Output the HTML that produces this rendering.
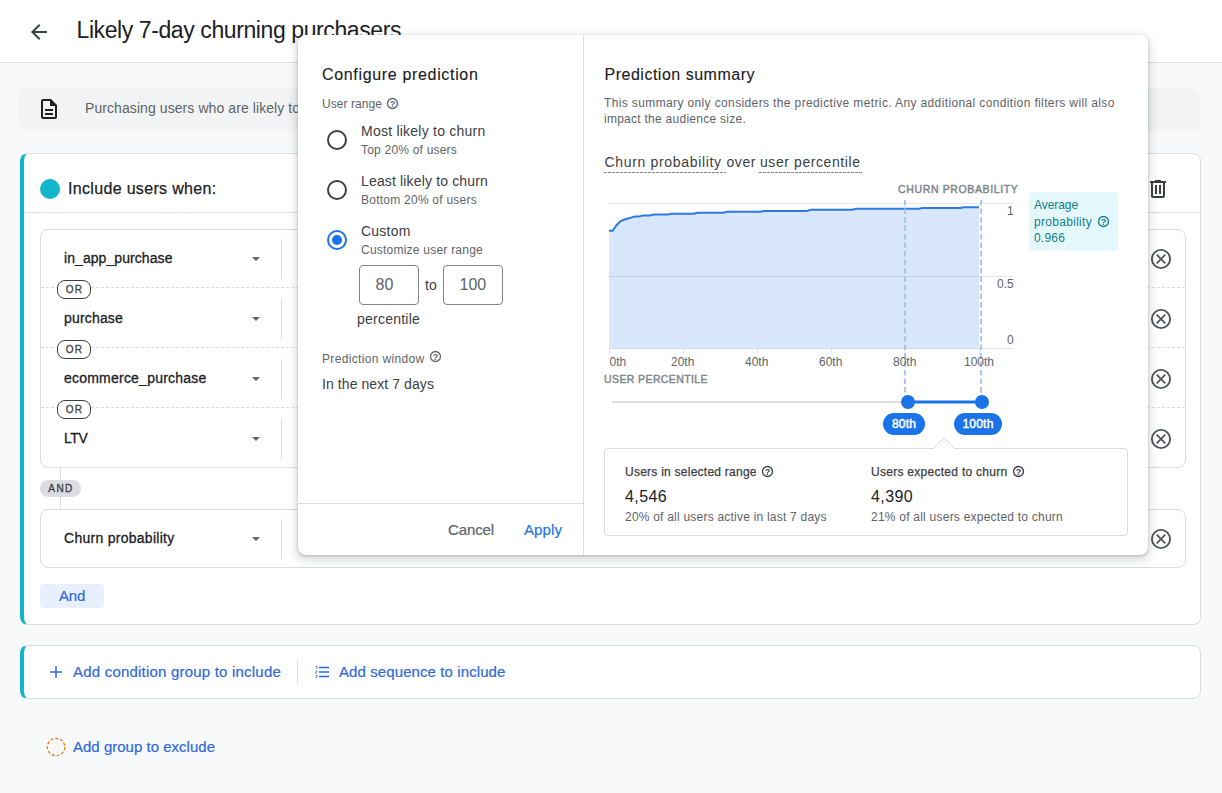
<!DOCTYPE html>
<html><head><meta charset="utf-8">
<style>
*{box-sizing:border-box;margin:0;padding:0}
html,body{width:1222px;height:793px;overflow:hidden;background:#f8f9fa;font-family:"Liberation Sans",sans-serif;color:#202124}
.abs{position:absolute}
.t{position:absolute;white-space:nowrap;line-height:1}
#hdr{position:absolute;left:0;top:0;width:1222px;height:63px;background:#fff;border-bottom:1px solid #dadce0}
#desc{position:absolute;left:19px;top:88px;width:1181px;height:43px;background:#f1f3f4;border-radius:8px}
.card{position:absolute;left:20px;width:1181px;background:#fff;border:1px solid #dadce0;border-left:4px solid #12b5cb;border-radius:8px}
.ibox{position:absolute;left:40px;width:1146px;border:1px solid #dadce0;border-radius:8px;background:#fff}
.dd{font-size:14px;color:#202124;-webkit-text-stroke:0.3px currentColor}
.caret{position:absolute;width:0;height:0;border-left:4px solid transparent;border-right:4px solid transparent;border-top:4px solid #5f6368}
.vsep{position:absolute;width:1px;background:#dadce0}
.dash{position:absolute;left:41px;width:1144px;height:0;border-top:1px dashed #dadce0}
.or{position:absolute;left:57px;width:34px;height:19px;border:1.2px solid #3c4043;border-radius:8px;background:#fff;font-size:10px;-webkit-text-stroke:0.3px #3c4043;color:#3c4043;text-align:center;line-height:17px;letter-spacing:1.2px;padding-left:1px}
#modal{position:absolute;left:298px;top:35px;width:850px;height:520px;background:#fff;border-radius:8px;box-shadow:0 1px 3px rgba(60,64,67,.3),0 4px 8px 3px rgba(60,64,67,.15)}
.g{color:#5f6368}
.blue{color:#1a73e8}

.med{-webkit-text-stroke:0.12px currentColor}
.med2{-webkit-text-stroke:0.25px currentColor}
.radio{width:20px;height:20px;border:2px solid #3c4043;border-radius:50%}
.radio.on{border-color:#1a73e8}
.radio.on i{position:absolute;left:3px;top:3px;width:10px;height:10px;border-radius:50%;background:#1a73e8}
.inp{width:60px;height:40px;border:1px solid #80868b;border-radius:4px;font-size:16px;color:#5f6368;text-align:left;padding-left:15.5px;line-height:38px}
.ctt{font-size:14px;color:#3c4043}
.dul{height:1.4px;background:repeating-linear-gradient(90deg,#80868b 0 2.7px,transparent 2.7px 4px)}
.axl{font-size:10.5px;color:#80868b;-webkit-text-stroke:0.45px currentColor}
.xl{font-size:12px}
.tl{color:#12808c}
.pill{height:21.5px;border-radius:11px;background:#1a73e8;color:#fff;font-size:12px;-webkit-text-stroke:0.45px #fff;letter-spacing:0.2px;text-align:center;line-height:22.5px}
#addc,#adds,#addx,#andb,#cancel,#apply{-webkit-text-stroke:0.2px currentColor}
</style>
<style id="ls">
#title{letter-spacing:-0.407px}
#incl{letter-spacing:0.326px}
#addc{letter-spacing:0.206px}
#adds{letter-spacing:0.096px}
#addx{letter-spacing:0.011px}
#cfg{letter-spacing:0.665px}
#ur{letter-spacing:0.062px}
#r1{letter-spacing:0.234px}
#r1s{letter-spacing:0.205px}
#r2{letter-spacing:0.156px}
#r2s{letter-spacing:0.243px}
#r3{letter-spacing:0.211px}
#r3s{letter-spacing:0.230px}
#pct{letter-spacing:0.230px}
#pw{letter-spacing:0.340px}
#n7{letter-spacing:0.082px}
#cancel{letter-spacing:-0.117px}
#apply{letter-spacing:0.094px}
#ps{letter-spacing:0.507px}
#ps1{letter-spacing:0.371px}
#ps2{letter-spacing:0.263px}
#ct1{letter-spacing:0.671px}
#ct2{letter-spacing:0.566px}
#ct3{letter-spacing:0.578px}
#cp{letter-spacing:0.636px}
#up{letter-spacing:0.398px}
#av1{letter-spacing:-0.069px}
#av2{letter-spacing:0.300px}
#av3{letter-spacing:0.194px}
#u1{letter-spacing:0.247px}
#n1{letter-spacing:0.391px}
#s1{letter-spacing:0.219px}
#u2{letter-spacing:0.279px}
#n2{letter-spacing:0.391px}
#s2{letter-spacing:0.232px}
#dd0{letter-spacing:0.072px}
#dd1{letter-spacing:0.176px}
#dd2{letter-spacing:0.221px}
#dd3{letter-spacing:-0.380px}
#dd4{letter-spacing:0.274px}
#andb{letter-spacing:-0.234px}
</style></head><body>
<div id="hdr"></div>
<svg class="abs" style="left:27px;top:20px" width="24" height="24" viewBox="0 0 24 24"><path d="M20 11H7.83l5.59-5.59L12 4l-8 8 8 8 1.41-1.41L7.83 13H20v-2z" fill="#3c4043"/></svg>
<div class="t" id="title" style="left:76.5px;top:19px;font-size:23px;color:#202124">Likely 7-day churning purchasers</div>
<div id="desc"></div>
<svg class="abs" style="left:37px;top:97px" width="24" height="24" viewBox="0 0 24 24"><path d="M8 16h8v2H8zm0-4h8v2H8zm6-10H6c-1.100 0-2 .9-2 2v16c0 1.100.89 2 1.990 2H18c1.100 0 2-.9 2-2V8l-6-6zm4 18H6V4h7v5h5v11z" fill="#202124"/></svg>
<div class="t g" id="desctxt" style="left:85px;top:101px;font-size:14px;letter-spacing:0.08px">Purchasing users who are likely to churn in the next 7 days.</div>

<div class="card" style="top:153px;height:472px"></div>
<div class="abs" style="left:40px;top:179px;width:20px;height:20px;border-radius:50%;background:#12b5cb"></div>
<div class="t" id="incl" style="left:68px;top:181px;font-size:16px;color:#202124;-webkit-text-stroke:0.25px currentColor">Include users when:</div>
<div class="abs" style="left:24px;top:212px;width:1176px;height:1px;background:#dadce0"></div>
<svg class="abs" style="left:1146px;top:177px" width="24" height="24" viewBox="0 0 24 24"><path d="M15 4V3H9v1H4v2h1v13c0 1.100.9 2 2 2h10c1.100 0 2-.9 2-2V6h1V4h-5zm2 15H7V6h10v13zM9 8h2v9H9zm4 0h2v9h-2z" fill="#3c4043"/></svg>

<div class="ibox" style="top:229px;height:239px"></div>
<div class="ibox" style="top:509px;height:59px"></div>

<div class="t dd" id="dd0" style="left:64px;top:251px">in_app_purchase</div>
<div class="t dd" id="dd1" style="left:64px;top:311px">purchase</div>
<div class="t dd" id="dd2" style="left:64px;top:371px">ecommerce_purchase</div>
<div class="t dd" id="dd3" style="left:64px;top:431px">LTV</div>
<div class="t dd" id="dd4" style="left:64px;top:531px">Churn probability</div>
<div class="caret" style="left:252px;top:257px"></div>
<div class="caret" style="left:252px;top:317px"></div>
<div class="caret" style="left:252px;top:377px"></div>
<div class="caret" style="left:252px;top:437px"></div>
<div class="caret" style="left:252px;top:537px"></div>
<div class="vsep" style="left:281px;top:239px;height:40px"></div>
<div class="vsep" style="left:281px;top:299px;height:40px"></div>
<div class="vsep" style="left:281px;top:359px;height:40px"></div>
<div class="vsep" style="left:281px;top:419px;height:40px"></div>
<div class="vsep" style="left:281px;top:519px;height:40px"></div>
<div class="dash" style="top:287px"></div>
<div class="dash" style="top:347px"></div>
<div class="dash" style="top:407px"></div>
<div class="or" style="top:280px">OR</div>
<div class="or" style="top:340px">OR</div>
<div class="or" style="top:400px">OR</div>

<div class="vsep" style="left:60px;top:468px;height:41px"></div>
<div class="abs" style="left:40px;top:480px;width:41px;height:17px;border-radius:9px;background:#dadce0;font-size:10px;-webkit-text-stroke:0.3px #3c4043;color:#3c4043;text-align:center;line-height:17px;letter-spacing:1.4px;padding-left:1px">AND</div>
<div class="abs" style="left:40px;top:584px;width:64px;height:24px;border-radius:4px;background:#e8f0fe"></div>
<div class="t" id="andb" style="left:59px;top:588px;font-size:15px;color:#2f68dc">And</div>

<svg class="abs" style="left:1149px;top:247px" width="24" height="24" viewBox="0 0 24 24"><circle cx="12" cy="12" r="9.100" fill="none" stroke="#50535a" stroke-width="1.900"/><path d="M7.700 7.700l8.600 8.600M16.300 7.700l-8.600 8.600" stroke="#50535a" stroke-width="1.800"/></svg>
<svg class="abs" style="left:1149px;top:307px" width="24" height="24" viewBox="0 0 24 24"><circle cx="12" cy="12" r="9.100" fill="none" stroke="#50535a" stroke-width="1.900"/><path d="M7.700 7.700l8.600 8.600M16.300 7.700l-8.600 8.600" stroke="#50535a" stroke-width="1.800"/></svg>
<svg class="abs" style="left:1149px;top:367px" width="24" height="24" viewBox="0 0 24 24"><circle cx="12" cy="12" r="9.100" fill="none" stroke="#50535a" stroke-width="1.900"/><path d="M7.700 7.700l8.600 8.600M16.300 7.700l-8.600 8.600" stroke="#50535a" stroke-width="1.800"/></svg>
<svg class="abs" style="left:1149px;top:427px" width="24" height="24" viewBox="0 0 24 24"><circle cx="12" cy="12" r="9.100" fill="none" stroke="#50535a" stroke-width="1.900"/><path d="M7.700 7.700l8.600 8.600M16.300 7.700l-8.600 8.600" stroke="#50535a" stroke-width="1.800"/></svg>
<svg class="abs" style="left:1149px;top:527px" width="24" height="24" viewBox="0 0 24 24"><circle cx="12" cy="12" r="9.100" fill="none" stroke="#50535a" stroke-width="1.900"/><path d="M7.700 7.700l8.600 8.600M16.300 7.700l-8.600 8.600" stroke="#50535a" stroke-width="1.800"/></svg>

<div class="card" style="top:645px;height:54px"></div>
<svg class="abs" style="left:48px;top:664px" width="16" height="16" viewBox="0 0 16 16"><path d="M8 2v12M2 8h12" stroke="#2f68dc" stroke-width="1.500"/></svg>
<div class="t" id="addc" style="left:73px;top:664px;font-size:15px;color:#2f68dc">Add condition group to include</div>
<div class="vsep" style="left:297px;top:660px;height:24px"></div>
<svg class="abs" style="left:314px;top:664px" width="16" height="16" viewBox="0 0 16 16"><path d="M5 3.500h10M5 8h10M5 12.500h10" stroke="#2f68dc" stroke-width="1.400"/><path d="M1.500 2.500h1.500v2.500M1.500 7h1.500l-1.500 2h1.500M1.500 11.500h1.500v2h-1.500" stroke="#2f68dc" stroke-width="0.800" fill="none"/></svg>
<div class="t" id="adds" style="left:339px;top:664px;font-size:15px;color:#2f68dc">Add sequence to include</div>
<svg class="abs" style="left:45px;top:736px" width="22" height="22" viewBox="0 0 22 22"><circle cx="11" cy="11" r="8.700" fill="none" stroke="#e37400" stroke-width="1.200" stroke-dasharray="3 2"/></svg>
<div class="t" id="addx" style="left:73px;top:739px;font-size:15px;color:#2f68dc">Add group to exclude</div>


<div id="modal">
<div class="abs" style="left:285px;top:0;width:1px;height:520px;background:#dadce0"></div>
<div class="abs" style="left:0;top:468px;width:285px;height:1px;background:#dadce0"></div>
</div>
<!-- left panel (page coords) -->
<div class="t med" id="cfg" style="left:322px;top:67px;font-size:16px;color:#202124">Configure prediction</div>
<div class="t g" id="ur" style="left:322px;top:98px;font-size:12px">User range</div>
<svg class="abs qm" style="left:386px;top:97px" width="13" height="13" viewBox="0 0 13 13"><circle cx="6.500" cy="6.500" r="5" fill="none" stroke="#5f6368" stroke-width="1.300"/><text x="6.500" y="9.600" font-size="9" font-weight="bold" text-anchor="middle" fill="#5f6368" font-family="Liberation Sans, sans-serif">?</text></svg>

<div class="abs radio" style="left:327px;top:130px"></div>
<div class="t" id="r1" style="left:361px;top:124px;font-size:14px;color:#3c4043">Most likely to churn</div>
<div class="t g" id="r1s" style="left:361px;top:144px;font-size:12px">Top 20% of users</div>
<div class="abs radio" style="left:327px;top:180px"></div>
<div class="t" id="r2" style="left:361px;top:174px;font-size:14px;color:#3c4043">Least likely to churn</div>
<div class="t g" id="r2s" style="left:361px;top:194px;font-size:12px">Bottom 20% of users</div>
<div class="abs radio on" style="left:327px;top:230px"><i></i></div>
<div class="t" id="r3" style="left:361px;top:224px;font-size:14px;color:#3c4043">Custom</div>
<div class="t g" id="r3s" style="left:361px;top:244px;font-size:12px">Customize user range</div>

<div class="abs inp" style="left:359px;top:265px">80</div>
<div class="t" id="to" style="left:425px;top:278px;font-size:14px;color:#3c4043">to</div>
<div class="abs inp" style="left:443px;top:265px">100</div>
<div class="t" id="pct" style="left:357px;top:312px;font-size:14px;color:#3c4043">percentile</div>
<div class="t g" id="pw" style="left:322px;top:353px;font-size:12px">Prediction window</div>
<svg class="abs qm" style="left:429px;top:350px" width="13" height="13" viewBox="0 0 13 13"><circle cx="6.500" cy="6.500" r="5" fill="none" stroke="#5f6368" stroke-width="1.300"/><text x="6.500" y="9.600" font-size="9" font-weight="bold" text-anchor="middle" fill="#5f6368" font-family="Liberation Sans, sans-serif">?</text></svg>
<div class="t" id="n7" style="left:322px;top:377px;font-size:14px;color:#3c4043">In the next 7 days</div>
<div class="t g" id="cancel" style="left:448px;top:521.5px;font-size:15px">Cancel</div>
<div class="t" id="apply" style="left:524px;top:521.5px;font-size:15px;color:#1a73e8">Apply</div>

<!-- right panel -->
<div class="t med" id="ps" style="left:604.5px;top:67px;font-size:16px;color:#202124">Prediction summary</div>
<div class="t g" id="ps1" style="left:604px;top:97px;font-size:12px">This summary only considers the predictive metric. Any additional condition filters will also</div>
<div class="t g" id="ps2" style="left:604px;top:113px;font-size:12px">impact the audience size.</div>
<div class="t ctt" id="ct1" style="left:604.5px;top:155px">Churn probability</div>
<div class="t ctt" id="ct2" style="left:726.5px;top:155px">over</div>
<div class="t ctt" id="ct3" style="left:760px;top:155px">user percentile</div>
<div class="abs dul" style="left:604px;top:172px;width:122px"></div>
<div class="abs dul" style="left:759px;top:172px;width:103px"></div>
<div class="t axl" id="cp" style="left:898px;top:184px">CHURN PROBABILITY</div>
<div class="t axl" id="up" style="left:604px;top:374px">USER PERCENTILE</div>

<svg class="abs" style="left:600px;top:195px" width="430" height="215" viewBox="600 195 430 215">
<g stroke="#e3e5e8" stroke-width="1"><path d="M609 203.500H1013M609 276.500H1013M609 348.500H1013"/>
<path d="M609.500 349v5M683.500 349v5M757.500 349v5M831.500 349v5M905.500 349v5M979.500 349v5"/></g>
<path d="M609 230.700 H612.800 L616.400 225.300 L620.500 221.200 L624.500 219.500 L632.700 217.100 L635.200 216.600 L639.300 216.400 L642.200 215.600 L650 215.500 L653.200 214.600 L668 214.600 L671.200 213.800 L694.100 213.800 L697.400 212.700 L723.600 212.700 L726.800 211.700 L760.400 211.700 L764.200 210.900 L807 210.900 L811 209.800 L852 209.800 L856 208.800 L919 208.800 L922.500 208 L960.500 208 L964 207.200 L979 207.200 V348 H609Z" fill="#d9e7fd"/>
<path d="M609 348.500H979" stroke="#c5d4ee" stroke-width="1" opacity="0.500"/>
<path d="M609 276.500H979" stroke="#c3cfe2" stroke-width="1"/>
<path d="M609 230.700 H612.800 L616.400 225.300 L620.500 221.200 L624.500 219.500 L632.700 217.100 L635.200 216.600 L639.300 216.400 L642.200 215.600 L650 215.500 L653.200 214.600 L668 214.600 L671.200 213.800 L694.100 213.800 L697.400 212.700 L723.600 212.700 L726.800 211.700 L760.400 211.700 L764.200 210.900 L807 210.900 L811 209.800 L852 209.800 L856 208.800 L919 208.800 L922.500 208 L960.500 208 L964 207.200 L979 207.200" fill="none" stroke="#2e78ec" stroke-width="2" stroke-linejoin="round"/>
<path d="M905 200V402M981 200V402" stroke="#a0c1f8" stroke-width="1.800" stroke-dasharray="5.500 3"/>
<path d="M612 402H908" stroke="#dadce0" stroke-width="2"/>
<path d="M908 402H982" stroke="#1a73e8" stroke-width="3"/>
<circle cx="908" cy="402" r="7" fill="#1a73e8"/><circle cx="982" cy="402" r="7" fill="#1a73e8"/>
</svg>
<div class="t g xl" style="left:609.5px;top:355.5px">0th</div>
<div class="t g xl" style="left:671px;top:355.5px">20th</div>
<div class="t g xl" style="left:745px;top:355.5px">40th</div>
<div class="t g xl" style="left:819px;top:355.5px">60th</div>
<div class="t g xl" style="left:893px;top:355.5px">80th</div>
<div class="t g xl" style="left:964px;top:355.5px">100th</div>
<div class="t g xl" style="left:1007px;top:204.5px">1</div>
<div class="t g xl" style="left:997px;top:278px">0.5</div>
<div class="t g xl" style="left:1007px;top:334px">0</div>

<div class="abs" style="left:1029px;top:192px;width:89px;height:59px;background:#e4f7fb;border-radius:4px"></div>
<div class="t tl" id="av1" style="left:1034px;top:199px;font-size:12px">Average</div>
<div class="t tl" id="av2" style="left:1034px;top:216px;font-size:12px">probability</div>
<div class="t tl" id="av3" style="left:1034px;top:232px;font-size:12px">0.966</div>
<svg class="abs qm" style="left:1097px;top:215px" width="13" height="13" viewBox="0 0 13 13"><circle cx="6.500" cy="6.500" r="5" fill="none" stroke="#12808c" stroke-width="1.300"/><text x="6.500" y="9.600" font-size="9" font-weight="bold" text-anchor="middle" fill="#12808c" font-family="Liberation Sans, sans-serif">?</text></svg>

<div class="abs pill" style="left:883px;top:413px;width:42px">80th</div>
<div class="abs pill" style="left:954px;top:413px;width:48px">100th</div>

<div class="abs" style="left:604px;top:448px;width:524px;height:88px;border:1px solid #dadce0;border-radius:4px;background:#fff"></div>
<svg class="abs" style="left:930px;top:436px" width="28" height="14" viewBox="0 0 28 14"><path d="M3 13 L14 2 L25 13" fill="#fff" stroke="#dadce0" stroke-width="1"/><path d="M4 13.500H24" stroke="#fff" stroke-width="2"/></svg>
<div class="t med2" id="u1" style="left:625px;top:466px;font-size:12px;color:#3c4043">Users in selected range</div>
<svg class="abs qm" style="left:761px;top:465px" width="13" height="13" viewBox="0 0 13 13"><circle cx="6.500" cy="6.500" r="5" fill="none" stroke="#3c4043" stroke-width="1.300"/><text x="6.500" y="9.600" font-size="9" font-weight="bold" text-anchor="middle" fill="#3c4043" font-family="Liberation Sans, sans-serif">?</text></svg>
<div class="t" id="n1" style="left:625px;top:488.5px;font-size:16px;color:#202124">4,546</div>
<div class="t g" id="s1" style="left:625px;top:511px;font-size:12px">20% of all users active in last 7 days</div>
<div class="t med2" id="u2" style="left:871px;top:466px;font-size:12px;color:#3c4043">Users expected to churn</div>
<svg class="abs qm" style="left:1012px;top:465px" width="13" height="13" viewBox="0 0 13 13"><circle cx="6.500" cy="6.500" r="5" fill="none" stroke="#3c4043" stroke-width="1.300"/><text x="6.500" y="9.600" font-size="9" font-weight="bold" text-anchor="middle" fill="#3c4043" font-family="Liberation Sans, sans-serif">?</text></svg>
<div class="t" id="n2" style="left:871px;top:488.5px;font-size:16px;color:#202124">4,390</div>
<div class="t g" id="s2" style="left:871px;top:511px;font-size:12px">21% of all users expected to churn</div>

</body></html>
